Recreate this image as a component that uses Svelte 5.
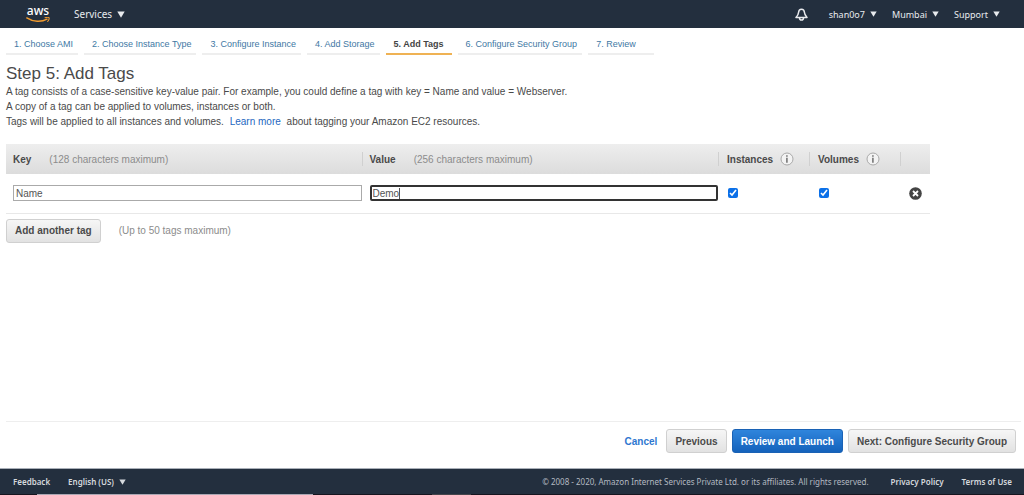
<script>
  const steps = [
    '1. Choose AMI',
    '2. Choose Instance Type',
    '3. Configure Instance',
    '4. Add Storage',
    '5. Add Tags',
    '6. Configure Security Group',
    '7. Review'
  ];
  const current = 4;
  const menus = ['shan0o7', 'Mumbai', 'Support'];
  let tag = $state({ key: 'Name', value: 'Demo', instances: true, volumes: true });
</script>

{#snippet arrow()}
  <svg class="arrow" viewBox="0 0 8 7" aria-hidden="true"><path d="M0.3 0.5h7.4L4 6.8z" fill="currentColor" /></svg>
{/snippet}

{#snippet info(label)}
  <button class="info" type="button" aria-label={label}>
    <svg viewBox="0 0 14 14" aria-hidden="true">
      <circle cx="7" cy="7" r="6" fill="#f3f3f3" stroke="#a9a9a9" />
      <path d="M6.1 5.7h1.6v5H6.1zM6.1 3.2h1.6v1.5H6.1z" fill="#777" />
    </svg>
  </button>
{/snippet}

<div class="page">
  <header class="top">
    <a class="logo" href="#home" aria-label="AWS home">
      <span>aws</span>
      <svg viewBox="0 0 24 7" aria-hidden="true">
        <path d="M0.8 0.9C7 5 15.500 5.300 21 2.200" fill="none" stroke="#f29b2e" stroke-width="1.4" stroke-linecap="round" />
        <path d="M19 0.700C20.800 0.300 22.700 0.200 23 0.700C23.300 1.300 22.700 3.300 21.700 4.500" fill="none" stroke="#f29b2e" stroke-width="1.100" stroke-linecap="round" />
      </svg>
    </a>
    <button class="services" type="button">Services {@render arrow()}</button>
    <div class="account">
      <button class="bell" type="button" aria-label="Notifications">
        <svg viewBox="0 0 13 13" aria-hidden="true" fill="none" stroke="#e8eaed" stroke-width="1.5" stroke-linejoin="round">
          <path d="M6.500 1.200C4.500 1.200 3.700 2.700 3.600 4.300C3.500 6.500 2.600 7.700 1 9.500H12C10.400 7.700 9.500 6.500 9.400 4.300C9.300 2.700 8.500 1.200 6.500 1.200Z" />
          <path d="M4.500 9.700C4.500 12.900 8.500 12.900 8.500 9.700" />
        </svg>
      </button>
      {#each menus as menu}
        <button type="button">{menu} {@render arrow()}</button>
      {/each}
    </div>
  </header>

  <nav class="steps" aria-label="Wizard steps">
    {#each steps as step, i}
      <a href="#step-{i + 1}" class:active={i === current} aria-current={i === current ? 'step' : undefined}>{step}</a>
    {/each}
  </nav>

  <main>
    <h1>Step 5: Add Tags</h1>
    <p>A tag consists of a case-sensitive key-value pair. For example, you could define a tag with key = Name and value = Webserver.</p>
    <p>A copy of a tag can be applied to volumes, instances or both.</p>
    <p>Tags will be applied to all instances and volumes. <a class="learn" href="#learn">Learn more</a> about tagging your Amazon EC2 resources.</p>

    <table>
      <colgroup>
        <col /><col /><col class="check" /><col class="check" /><col class="remove" />
      </colgroup>
      <thead>
        <tr>
          <th><label for="key">Key</label><span class="hint">(128 characters maximum)</span></th>
          <th><label for="value">Value</label><span class="hint">(256 characters maximum)</span></th>
          <th><div class="head"><label for="instances">Instances</label>{@render info('About instances')}</div></th>
          <th><div class="head"><label for="volumes">Volumes</label>{@render info('About volumes')}</div></th>
          <th></th>
        </tr>
      </thead>
      <tbody>
        <tr>
          <td><input id="key" type="text" bind:value={tag.key} /></td>
          <td>
            <div class="field">
              <input id="value" class="focused" type="text" bind:value={tag.value} />
              <span class="caret"></span>
            </div>
          </td>
          <td><input id="instances" type="checkbox" bind:checked={tag.instances} /></td>
          <td><input id="volumes" type="checkbox" bind:checked={tag.volumes} /></td>
          <td>
            <button class="delete" type="button" aria-label="Remove tag">
              <svg viewBox="0 0 13 13" aria-hidden="true">
                <circle cx="6.500" cy="6.500" r="6.300" fill="#444" />
                <path d="M4 4l5 5M9 4l-5 5" stroke="#fff" stroke-width="1.800" />
              </svg>
            </button>
          </td>
        </tr>
      </tbody>
    </table>

    <div class="add">
      <button class="btn" type="button">Add another tag</button>
      <span class="hint">(Up to 50 tags maximum)</span>
    </div>
  </main>

  <div class="actions">
    <a href="#cancel">Cancel</a>
    <button class="btn" type="button">Previous</button>
    <button class="btn primary" type="button">Review and Launch</button>
    <button class="btn" type="button">Next: Configure Security Group</button>
  </div>

  <footer>
    <a href="#feedback">Feedback</a>
    <button type="button">English (US) {@render arrow()}</button>
    <small>© 2008 - 2020, Amazon Internet Services Private Ltd. or its affiliates. All rights reserved.</small>
    <a href="#privacy">Privacy Policy</a>
    <a href="#terms">Terms of Use</a>
  </footer>
  <div class="strip"><span></span><span></span></div>
</div>

<style>
  :global(body) {
    margin: 0;
    background: #fff;
  }
  .page {
    display: flex;
    flex-direction: column;
    min-height: 100vh;
    color: #4a4a4a;
    font: 10px/15px "Liberation Sans", Arial, sans-serif;
  }
  .page * {
    box-sizing: border-box;
  }
  a {
    text-decoration: none;
  }
  button {
    font: inherit;
    color: inherit;
    background: none;
    border: 0;
    padding: 0;
    cursor: pointer;
  }
  svg {
    display: block;
  }
  .top,
  footer {
    display: flex;
    align-items: center;
    background: #232f3e;
    color: #e8ebee;
    font-family: "Noto Sans", "Open Sans", sans-serif;
  }
  .top {
    height: 28px;
    padding: 0 24px 0 26px;
  }
  .top button,
  footer button {
    display: flex;
    align-items: center;
    gap: 5px;
  }
  .arrow {
    width: 7px;
    height: 6px;
  }
  .logo {
    width: 24px;
    margin-right: 24px;
    color: #fff;
    font-size: 12px;
    line-height: 12px;
    font-weight: 500;
    text-align: center;
  }
  .logo span {
    display: block;
  }
  .logo svg {
    width: 24px;
    height: 7px;
  }
  .services {
    font-size: 10px;
  }
  .services .arrow {
    width: 8px;
    height: 7px;
  }
  .account {
    display: flex;
    align-items: center;
    gap: 15px;
    margin-left: auto;
    font-size: 9px;
  }
  .bell {
    margin-right: 6px;
  }
  .bell svg {
    width: 13px;
    height: 13px;
  }
  .steps {
    display: flex;
    gap: 6px;
    padding: 8px 6px 0;
    font-size: 9px;
  }
  .steps a {
    min-width: 66px;
    padding: 1px 5px 1px 8px;
    border-bottom: 2px solid #eee;
    color: #4178a4;
  }
  .steps .active {
    border-color: #efb254;
    color: #444;
    font-weight: bold;
  }
  main {
    flex: 1;
    padding: 9px 6px 0;
  }
  h1 {
    margin: 0;
    font-size: 17px;
    line-height: 20px;
    font-weight: normal;
  }
  p {
    margin: 0;
  }
  .learn {
    margin: 0 3px;
    color: #1e67bf;
  }
  table {
    width: calc(100% - 88px);
    margin-top: 15px;
    border-collapse: collapse;
    table-layout: fixed;
  }
  .check {
    width: 91px;
  }
  .remove {
    width: 29px;
  }
  thead {
    background: linear-gradient(#eee, #dcdcdc);
  }
  th {
    height: 30px;
    padding: 0 0 0 8px;
    text-align: left;
    background: linear-gradient(#d0d0d0, #d0d0d0) right center / 1px 14px no-repeat;
  }
  th:last-child {
    background: none;
  }
  .hint {
    margin-left: 18px;
    color: #8c8c8c;
    font-weight: normal;
  }
  .head {
    display: flex;
    align-items: center;
    gap: 7px;
  }
  .info svg {
    width: 14px;
    height: 14px;
  }
  td {
    height: 39px;
    padding: 0 0 0 8px;
    border-bottom: 1px solid #e8e8e8;
  }
  th:first-child,
  td:first-child,
  th:nth-child(2),
  td:nth-child(2) {
    padding: 0 1px 0 7px;
  }
  input {
    display: block;
    margin: 0;
  }
  input[type='text'] {
    width: 100%;
    height: 16px;
    padding: 0 2px;
    border: 1px solid #aaa;
    background: #fff;
    color: #555;
    font: inherit;
  }
  input[type='text'].focused {
    padding: 0 1px;
    border: 2px solid #333;
    border-radius: 2px;
    outline: 0;
  }
  input[type='checkbox'] {
    width: 10px;
    height: 10px;
    margin-left: 1px;
    accent-color: #0b70e8;
  }
  .field {
    position: relative;
  }
  .caret {
    position: absolute;
    top: 3px;
    left: 29px;
    width: 1px;
    height: 11px;
    background: #555;
  }
  .delete {
    display: block;
  }
  .delete svg {
    width: 13px;
    height: 13px;
  }
  .add {
    display: flex;
    align-items: center;
    margin-top: 5px;
  }
  .btn {
    height: 24px;
    padding: 0 8px;
    border: 1px solid #d0d0d0;
    border-radius: 3px;
    background: linear-gradient(#f6f6f6, #e2e2e2);
    font-weight: bold;
  }
  .primary {
    border-color: #1a62b5;
    background: linear-gradient(#2f85dc, #1462bb);
    color: #fff;
  }
  .actions {
    display: flex;
    align-items: center;
    justify-content: flex-end;
    gap: 5px;
    margin: 0 3px 0 6px;
    padding: 7px 5px 15px 0;
    border-top: 1px solid #eee;
  }
  .actions a {
    margin-right: 4px;
    color: #2e77d0;
    font-weight: bold;
  }
  footer {
    height: 26px;
    padding: 0 12px 0 13px;
    border-top: 1px solid #a9afb8;
    color: #d5d9dd;
    font-size: 8px;
    font-weight: 600;
    gap: 18px;
  }
  footer a {
    color: inherit;
  }
  footer small {
    margin-left: auto;
    margin-right: 4px;
    color: #b4bac2;
    font-size: 8px;
    font-weight: normal;
  }
  .strip {
    display: flex;
    gap: 12%;
    height: 1px;
    padding-left: 37px;
    background: #17151f;
  }
  .strip span {
    width: 28%;
    background: #aaa7b3;
  }
  .strip span + span {
    width: 4%;
    background: #45454b;
  }
</style>
